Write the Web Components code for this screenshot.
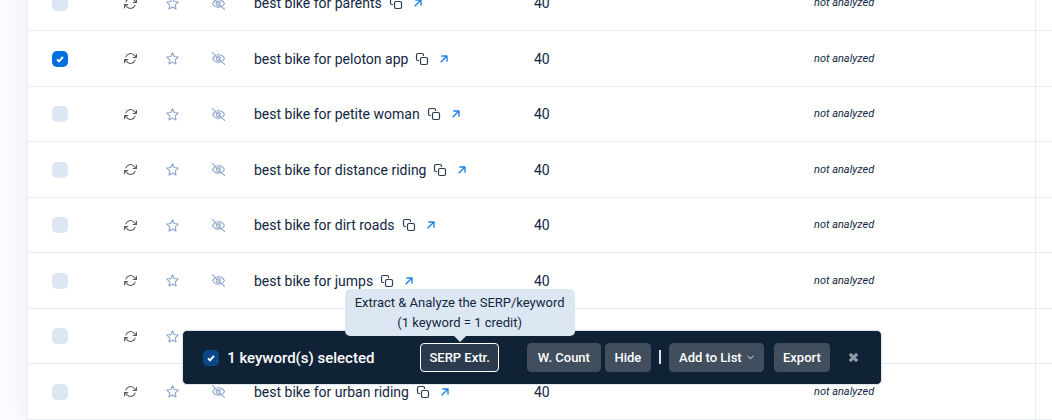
<!DOCTYPE html>
<html lang="en">
<head>
<meta charset="utf-8">
<title>Keywords</title>
<style>
  body {
    margin: 0;
    height: 100vh;
    overflow: hidden;
    font: 14px/20px Roboto, "Liberation Sans", sans-serif;
    color: #12263f;
    background: #f9fbfe;
    --line: #e6edf7;
    --pale: #dde7f3;
    --blue: #0070e0;
    --ink: #102236;
  }
</style>
</head>
<body>
<keyword-app></keyword-app>

<script>
/**
 * Inline SVG markup of every icon, by name.
 */
const ICONS = {
  refresh: `<path d="M23 4v6h-6M1 20v-6h6"/>
    <path d="M3.5 9a9 9 0 0 1 14.9-3.4L23 10M1 14l4.6 4.4A9 9 0 0 0 20.5 15"/>`,
  star: `<path d="M12 1.5l3.1 6.900 7.400.9-5.400 5.200 1.400 7.500L12 18.400l-6.500 3.600 1.400-7.500L1.500 9.300l7.400-.9z"/>`,
  hidden: `<path d="M6.500 6.300C4 7.700 2.200 9.800 1 12c2.300 4.300 6 7 11 7 2 0 3.800-.5 5.400-1.300"/>
    <path d="M9.500 5.300C10.300 5.100 11.100 5 12 5c5 0 8.700 2.700 11 7-.8 1.500-1.800 2.800-3.100 3.900"/>
    <path d="M8.700 9.500a4 4 0 0 0 5.700 5.600M12 8.500a3.500 3.500 0 0 1 3.500 3.500M1 1l22 22"/>`,
  copy: `<rect x="9" y="9" width="14" height="14" rx="3"/>
    <path d="M5 15H4a3 3 0 0 1-3-3V4a3 3 0 0 1 3-3h8a3 3 0 0 1 3 3v1"/>`,
  arrow: `<path d="M2 22L21 3M4 3h17v17"/>`,
  chevron: `<path d="M3 8l9 8 9-8"/>`,
  close: `<path d="M4 4l16 16M20 4L4 20"/>`
};

/**
 * UI Icon.
 *
 * Draws the icon given by the name attribute in the current colour.
 */
class UiIcon extends HTMLElement {
  constructor() {
    super();
    this.attachShadow({ mode: 'open' });
  }

  connectedCallback() {
    this.shadowRoot.innerHTML = `
      <style>
        :host {
          display: block;
          width: 13px;
          height: 13px;
        }

        svg {
          display: block;
          width: 100%;
          height: 100%;
          overflow: visible;
          fill: none;
          stroke: currentColor;
          stroke-width: var(--stroke, 2);
          stroke-linecap: var(--cap, round);
          stroke-linejoin: round;
        }
      </style>
      <svg viewBox="0 0 24 24" aria-hidden="true">${ICONS[this.getAttribute('name')]}</svg>
    `;
  }
}

/**
 * Check Box.
 *
 * A tick box, with its label text passed in the slot.
 */
class CheckBox extends HTMLElement {
  constructor() {
    super();
    this.attachShadow({ mode: 'open' });
  }

  connectedCallback() {
    this.shadowRoot.innerHTML = `
      <style>
        :host {
          display: block;
        }

        label {
          display: flex;
          align-items: center;
          gap: 8px;
        }

        input {
          appearance: none;
          flex: none;
          width: 16px;
          height: 16px;
          margin: 0;
          border-radius: 5px;
          background: var(--pale);
        }

        input:checked {
          background: var(--tick-color, var(--blue)) center / 8px 8px no-repeat
            url('data:image/svg+xml,<svg xmlns="http://www.w3.org/2000/svg" viewBox="0 0 8 8"><path d="M1 4.300L3 6.300 7 1.900" fill="none" stroke="white" stroke-width="1.900"/></svg>');
        }
      </style>
      <label>
        <input type="checkbox" ${this.hasAttribute('checked') ? 'checked' : ''}>
        <slot></slot>
      </label>
    `;
  }
}

/**
 * Keyword Table.
 *
 * Lists the keywords with their actions, volume and analysis state.
 */
class KeywordTable extends HTMLElement {
  constructor() {
    super();
    this.attachShadow({ mode: 'open' });
  }

  /**
   * Show a list of keywords.
   *
   * @param {Array<Object>} rows - Keywords to show.
   */
  set rows(rows) {
    this.shadowRoot.innerHTML = `
      <style>
        :host {
          display: block;
          flex: none;
          border-left: 1px solid var(--line);
          background: #fff;
          box-shadow: 0 0 24px rgba(18, 38, 63, .06);
        }

        table {
          width: 100%;
          table-layout: fixed;
          border-collapse: separate;
          border-spacing: 0;
        }

        .check { width: 88px; }
        .refresh { width: 42px; }
        .star { width: 46px; }
        .hide { width: 42px; }
        .keyword { width: 280px; }
        .volume { width: 280px; }
        .rest { width: 17px; }

        td {
          box-sizing: border-box;
          height: 55px;
          padding: 0 0 0 8px;
          border-bottom: 1px solid var(--line);
          white-space: nowrap;
        }

        tr:nth-child(even) td {
          height: 56px;
        }

        td:first-child {
          padding-left: 24px;
        }

        td:last-child {
          border-left: 1px solid var(--line);
        }

        button, a {
          display: block;
          padding: 0;
          border: 0;
          background: none;
          color: #8ba4cb;
        }

        .dark {
          color: #5c5c5c;
        }

        .name {
          display: flex;
          align-items: center;
        }

        .name button {
          margin: 0 12px 0 8px;
          color: #2b3b52;
          --stroke: 2.4;
        }

        .name button ui-icon {
          width: 12px;
          height: 12px;
        }

        .name a {
          color: #1a80e5;
          --stroke: 4;
          --cap: butt;
        }

        .name a ui-icon {
          width: 8px;
          height: 8px;
        }

        .state {
          font-size: 11px;
          font-style: italic;
        }
      </style>
      <table>
        <colgroup>
          <col class="check"><col class="refresh"><col class="star"><col class="hide">
          <col class="keyword"><col class="volume"><col><col class="rest">
        </colgroup>
        <tbody>${rows.map((row) => this.renderRow(row)).join('')}</tbody>
      </table>
    `;
  }

  renderRow(row) {
    return `
      <tr>
        <td><check-box ${row.checked ? 'checked' : ''}></check-box></td>
        <td><button class="dark"><ui-icon name="refresh"></ui-icon></button></td>
        <td><button><ui-icon name="star"></ui-icon></button></td>
        <td>${row.name ? '<button><ui-icon name="hidden"></ui-icon></button>' : ''}</td>
        <td>${row.name ? `
          <div class="name">
            ${row.name}
            <button><ui-icon name="copy"></ui-icon></button>
            <a href="#"><ui-icon name="arrow"></ui-icon></a>
          </div>` : ''}
        </td>
        <td>${row.volume || ''}</td>
        <td class="state">${row.name ? 'not analyzed' : ''}</td>
        <td></td>
      </tr>
    `;
  }
}

/**
 * Bar Button.
 *
 * A button of the action bar, with an optional tooltip slot above it.
 */
class BarButton extends HTMLElement {
  constructor() {
    super();
    this.attachShadow({ mode: 'open' });
    this.shadowRoot.innerHTML = `
      <style>
        :host {
          display: block;
          position: relative;
        }

        button {
          display: flex;
          align-items: center;
          justify-content: center;
          gap: 5px;
          box-sizing: border-box;
          width: 100%;
          height: 29px;
          padding: 0 8px;
          border: 1px solid #414e5e;
          border-radius: 4px;
          background: #414e5e;
          color: #fff;
          font: 500 13px/20px Roboto, "Liberation Sans", sans-serif;
          white-space: nowrap;
        }

        :host([active]) button {
          border-color: #fff;
          background: #2c3b4d;
        }

        ::slotted(ui-icon) {
          width: 7px;
          height: 7px;
          --stroke: 3;
        }
      </style>
      <button><slot></slot></button>
      <slot name="tip"></slot>
    `;
  }
}

/**
 * Tool Tip.
 *
 * A bubble centred above its parent, with an arrow that points down at it.
 */
class ToolTip extends HTMLElement {
  constructor() {
    super();
    this.attachShadow({ mode: 'open' });
    this.shadowRoot.innerHTML = `
      <style>
        :host {
          position: absolute;
          bottom: calc(100% + 7px);
          left: 50%;
          transform: translateX(-50%);
          box-sizing: border-box;
          padding: 4px 10px 3px;
          border-radius: 5px;
          background: var(--pale);
          color: #12263f;
          font-size: 13px;
          font-weight: 400;
          text-align: center;
          white-space: nowrap;
        }

        :host::after {
          content: "";
          position: absolute;
          top: 100%;
          left: 50%;
          margin-left: -6px;
          border: 6px solid transparent;
          border-top-color: var(--pale);
          border-bottom: 0;
        }
      </style>
      <slot></slot>
    `;
  }
}

/**
 * Action Bar.
 *
 * Floats over the table with actions for the selected keywords.
 */
class ActionBar extends HTMLElement {
  constructor() {
    super();
    this.attachShadow({ mode: 'open' });
    this.shadowRoot.innerHTML = `
      <style>
        :host {
          position: fixed;
          right: 16px;
          bottom: 35px;
          left: 28px;
          display: flex;
          justify-content: center;
        }

        .bar {
          display: flex;
          align-items: center;
          padding: 12px 22px 12px 20px;
          border: 1px solid var(--pale);
          border-radius: 5px;
          background: var(--ink);
          color: #fff;
        }

        check-box {
          margin-right: 46px;
          font-size: 15px;
          font-weight: 500;
          --tick-color: #09478a;
        }

        .group {
          display: flex;
          align-items: center;
          gap: 4px;
          margin-left: 28px;
        }

        .short { width: 46px; }
        .medium { width: 56px; }
        .wide { width: 74px; }
        .widest { width: 95px; }

        .rule {
          width: 2px;
          height: 14px;
          margin: 0 8px 2px;
          background: #dfe3e8;
        }

        .medium {
          margin: 0 18px 0 10px;
        }

        .close {
          padding: 0;
          border: 0;
          background: none;
          color: #9099a4;
          --stroke: 7;
          --cap: butt;
        }

        .close ui-icon {
          width: 11px;
          height: 11px;
        }
      </style>
      <div class="bar">
        <check-box checked>1 keyword(s) selected</check-box>
        <bar-button active>SERP Extr.
          <tool-tip slot="tip">Extract &amp; Analyze the SERP/keyword<br>(1 keyword = 1 credit)</tool-tip>
        </bar-button>
        <div class="group">
          <bar-button class="wide">W. Count</bar-button>
          <bar-button class="short">Hide</bar-button>
        </div>
        <span class="rule"></span>
        <bar-button class="widest">Add to List <ui-icon name="chevron"></ui-icon></bar-button>
        <bar-button class="medium">Export</bar-button>
        <button class="close"><ui-icon name="close"></ui-icon></button>
      </div>
    `;
  }
}

/**
 * Keyword App.
 *
 * The page: the table, scrolled to its end, under the action bar.
 */
class KeywordApp extends HTMLElement {
  constructor() {
    super();
    this.attachShadow({ mode: 'open' });
    this.shadowRoot.innerHTML = `
      <style>
        :host {
          display: flex;
          flex-direction: column;
          justify-content: flex-end;
          height: 100%;
          padding-left: 27px;
        }
      </style>
      <keyword-table></keyword-table>
      <action-bar></action-bar>
    `;
    this.shadowRoot.querySelector('keyword-table').rows = [
      { name: 'best bike for parents', volume: 40 },
      { name: 'best bike for peloton app', volume: 40, checked: true },
      { name: 'best bike for petite woman', volume: 40 },
      { name: 'best bike for distance riding', volume: 40 },
      { name: 'best bike for dirt roads', volume: 40 },
      { name: 'best bike for jumps', volume: 40 },
      {},
      { name: 'best bike for urban riding', volume: 40 }
    ];
  }
}

// Register custom elements
customElements.define('ui-icon', UiIcon);
customElements.define('check-box', CheckBox);
customElements.define('keyword-table', KeywordTable);
customElements.define('bar-button', BarButton);
customElements.define('tool-tip', ToolTip);
customElements.define('action-bar', ActionBar);
customElements.define('keyword-app', KeywordApp);
</script>
</body>
</html>
